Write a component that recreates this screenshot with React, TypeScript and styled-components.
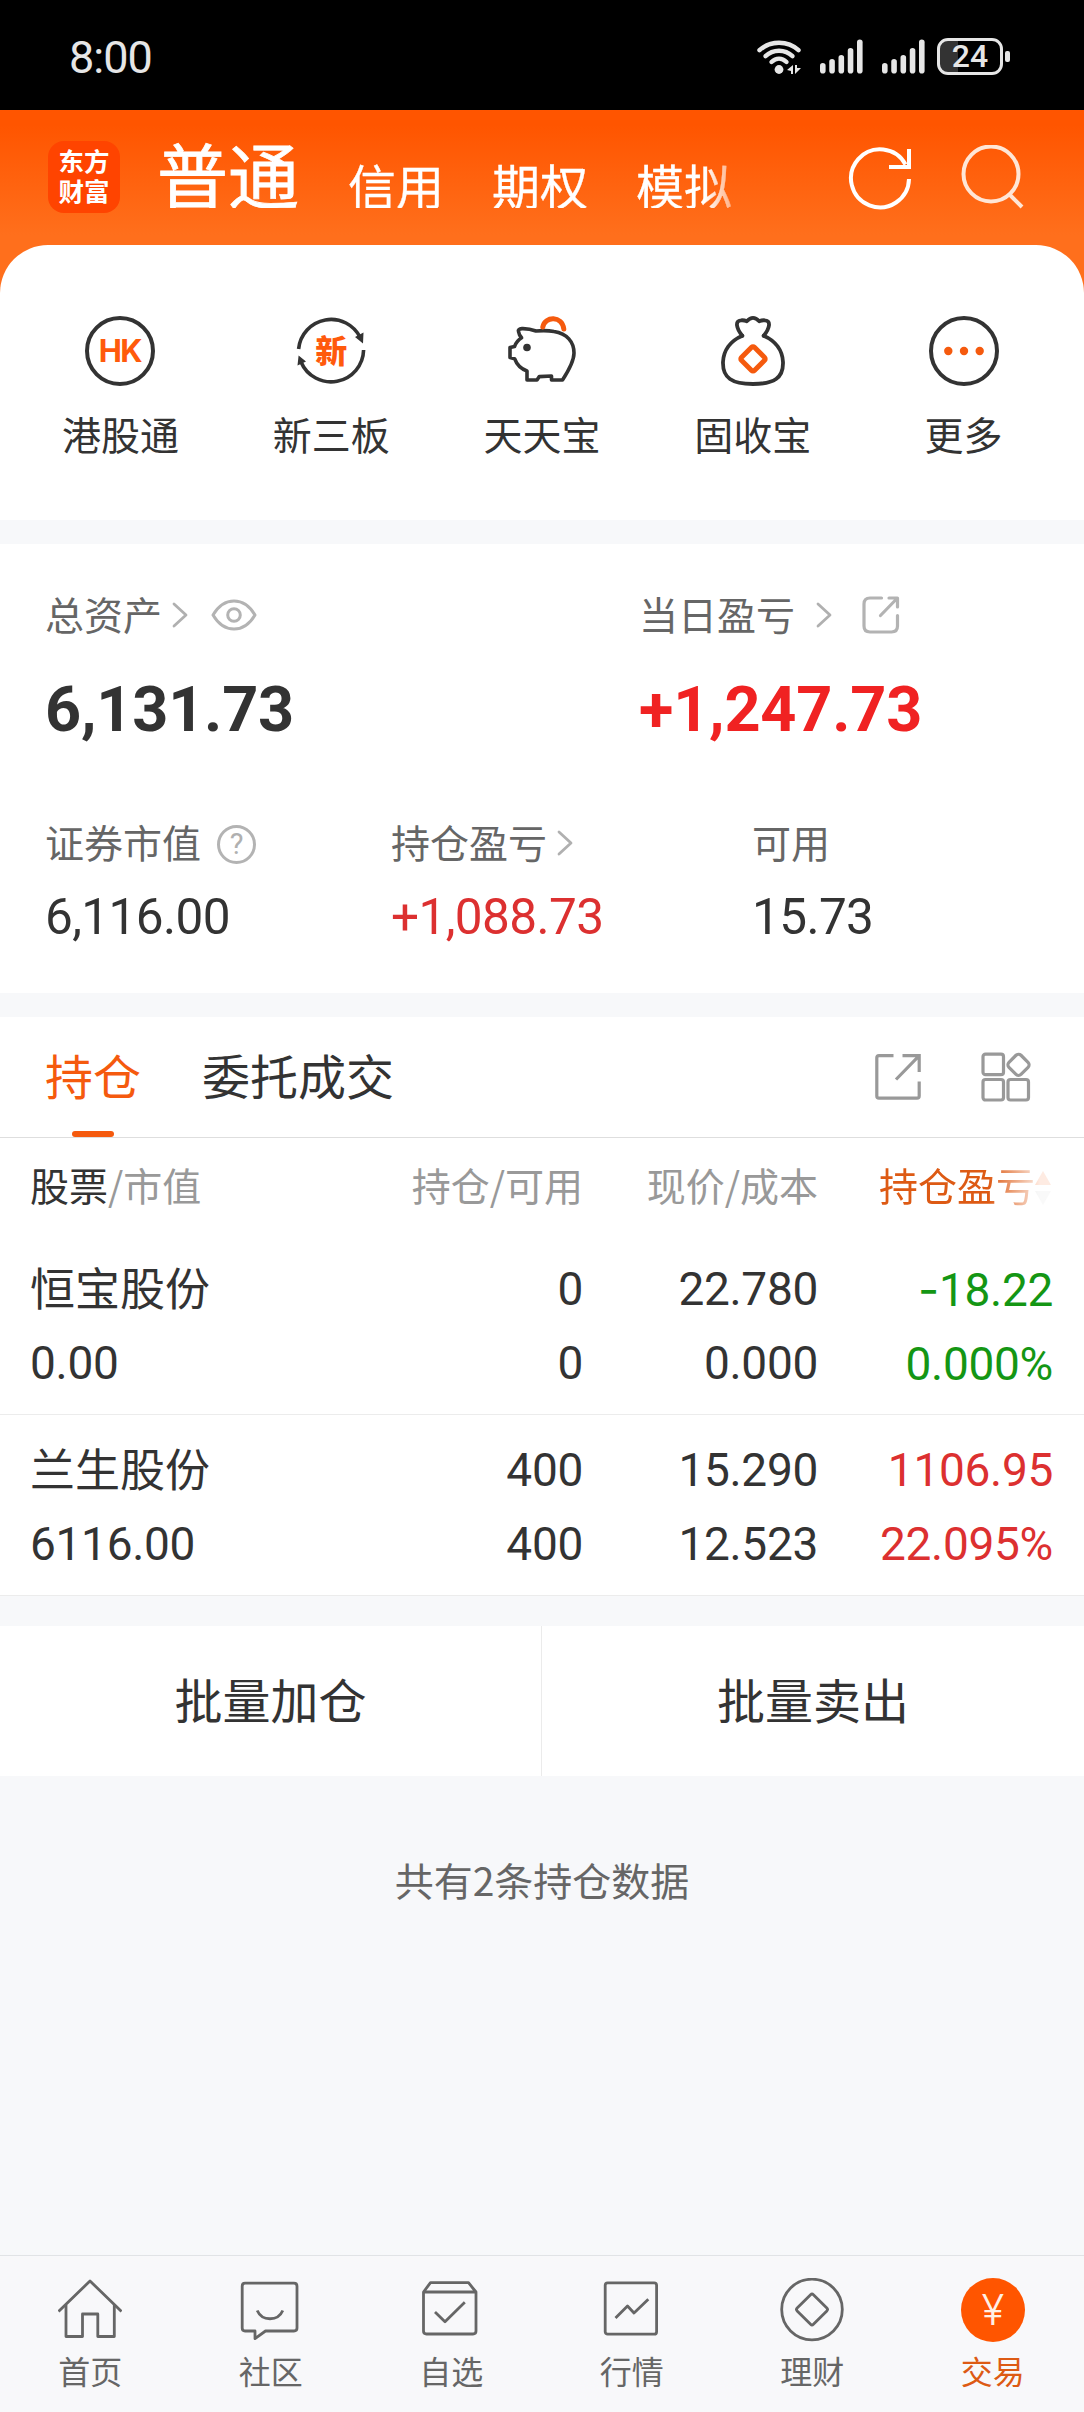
import React from "react";
import styled, { createGlobalStyle } from "styled-components";

const CJK = '"Noto Sans CJK SC", "Noto Sans", sans-serif';
const NUM = 'Roboto, "Noto Sans CJK SC", sans-serif';
const INK = "#333333";
const ORANGE = "#f55a0e";
const RED = "#dc3030";
const GREEN = "#149614";

const GlobalStyle = createGlobalStyle`
  * { box-sizing: border-box; }
  html, body { margin: 0; padding: 0; }
  body { background: #f7f8fa; font-family: ${CJK}; color: ${INK}; }
  svg { display: block; flex: none; }
`;

const Screen = styled.div`
  width: 1084px;
  height: 2412px;
  display: flex;
  flex-direction: column;
  background: #f7f8fa;
  overflow: hidden;
  white-space: nowrap;
`;

/* ---------- status bar ---------- */

const StatusBar = styled.div`
  height: 110px;
  flex: none;
  background: #000;
  display: flex;
  align-items: center;
  justify-content: space-between;
  padding: 3px 74px 0 69px;
`;

const Clock = styled.span`
  font: 400 45px/50px ${NUM};
  letter-spacing: -1px;
  padding-top: 3px;
  color: #e6e6e6;
`;

const StatusIcons = styled.div`
  display: flex;
  align-items: center;
`;

const Signal = styled.svg`
  margin-left: 19px;
`;

const Battery = styled.div`
  margin-left: 12px;
  display: flex;
  align-items: center;
  gap: 2px;
`;

const BatteryBody = styled.div`
  width: 66px;
  height: 37px;
  border: 3px solid #e6e6e6;
  border-radius: 11px;
  background: linear-gradient(to right, #333 18px, #000 18px);
  font: 500 32px/31px ${NUM};
  color: #e6e6e6;
  text-align: center;
`;

const BatteryNub = styled.div`
  width: 5px;
  height: 11px;
  border-radius: 2px;
  background: #e6e6e6;
`;

/* ---------- header ---------- */

const Top = styled.div`
  height: 410px;
  flex: none;
  background: linear-gradient(to bottom, #ff5500 15px, #ff6f1c 125px);
`;

const Header = styled.header`
  height: 135px;
  display: flex;
  align-items: flex-start;
  padding-left: 48px;
`;

const Logo = styled.div`
  width: 72px;
  height: 72px;
  margin-top: 31px;
  border-radius: 16px;
  background: #ff4400;
  color: #fff;
  display: flex;
  flex-direction: column;
  align-items: center;
  padding-top: 6px;
`;

const LogoLine = styled.span`
  height: 30px;
  font: 700 25.5px/30px ${NUM};
`;

const AccountTabs = styled.nav`
  display: flex;
  align-items: flex-end;
  gap: 48px;
  width: 640px;
  margin-left: 37px;
  margin-top: 27px;
  color: #fff;
  mask-image: linear-gradient(to right, #000 548px, transparent 600px);
`;

const AccountTab = styled.span<{ $active?: boolean }>`
  font: ${(p) => (p.$active ? "400 71px/70px" : "400 48px/48px")} ${CJK};
  padding-bottom: ${(p) => (p.$active ? 1 : 0)}px;
  margin-right: ${(p) => (p.$active ? 1 : 0)}px;
  -webkit-text-stroke: ${(p) => (p.$active ? 0.8 : 0.3)}px currentColor;
`;

const HeaderActions = styled.div`
  display: flex;
  gap: 47px;
  margin-left: 50px;
  margin-top: 35px;
`;

const Shortcuts = styled.section`
  height: 275px;
  background: #fff;
  border-radius: 48px 48px 0 0;
  padding: 66px 15px 0 15px;
  display: grid;
  grid-template-columns: repeat(5, 1fr);
`;

const Shortcut = styled.div`
  display: flex;
  flex-direction: column;
  align-items: center;
  gap: 20px;
  font: 400 39px/44px ${CJK};
`;

const Ring = styled.div`
  width: 70px;
  height: 70px;
  margin: 5px;
  border-radius: 50%;
  border: 4px solid ${INK};
  display: flex;
  align-items: center;
  justify-content: center;
  color: #ff5a0c;
  font: 700 31px/32px Inter, ${NUM};
  letter-spacing: -1.5px;
  text-indent: -1px;
`;

const CycleIcon = styled.div`
  display: grid;
  place-items: center;
  & > * { grid-area: 1 / 1; }
`;

const CycleGlyph = styled.span`
  font: 900 32px/32px ${CJK};
  color: #ff5a0c;
  padding-bottom: 4px;
`;

/* ---------- assets ---------- */

const Assets = styled.section`
  height: 449px;
  flex: none;
  margin-top: 24px;
  background: #fff;
  padding: 45px 0 0 45px;
`;

const AssetRow = styled.div<{ $columns: string }>`
  display: grid;
  grid-template-columns: ${(p) => p.$columns};
  & + & { margin-top: 72px; }
`;

const AssetLabel = styled.div`
  height: 52px;
  display: flex;
  align-items: center;
  color: #666;
`;

const LabelText = styled.span<{ $gap: number }>`
  font: 400 39px/48px ${CJK};
  padding-bottom: 4px;
  margin-right: ${(p) => p.$gap}px;
`;

const Total = styled.div<{ $color?: string }>`
  font: 700 63px/70px ${NUM};
  letter-spacing: -0.2px;
  margin-top: 34px;
  color: ${(p) => p.$color ?? INK};
`;

const Amount = styled.div<{ $color?: string }>`
  font: 400 49.5px/60px ${NUM};
  letter-spacing: -0.6px;
  margin-top: 18px;
  color: ${(p) => p.$color ?? INK};
`;

const Help = styled.span`
  width: 39px;
  height: 39px;
  margin-top: 2px;
  border: 3px solid #b3b3b3;
  border-radius: 50%;
  color: #b0b0b0;
  font: 400 29px/33px ${NUM};
  text-align: center;
`;

const Spacer = styled.span<{ $w: number }>`
  width: ${(p) => p.$w}px;
`;

/* ---------- holdings ---------- */

const Holdings = styled.section`
  flex: none;
  margin-top: 24px;
  background: #fff;
`;

const TabBar = styled.div`
  height: 121px;
  border-bottom: 1px solid #dedede;
  display: flex;
  padding: 0 53px 0 45px;
`;

const Tab = styled.div<{ $active?: boolean }>`
  height: 120px;
  margin-right: 61px;
  padding-top: 27px;
  display: flex;
  flex-direction: column;
  align-items: center;
  font: 400 48px/60px ${CJK};
  color: ${(p) => (p.$active ? ORANGE : INK)};
`;

const TabMark = styled.i`
  width: 42px;
  height: 6px;
  margin-top: auto;
  border-radius: 3px;
  background: ${ORANGE};
`;

const TabTools = styled.div`
  margin-left: auto;
  display: flex;
  align-items: center;
  gap: 60px;
`;

const TableRow = styled.div`
  display: grid;
  grid-template-columns: 320px 233px 235px 235px;
  padding: 0 31px 0 30px;
`;

const HeadRow = styled(TableRow)`
  height: 96px;
  font: 400 39px/92px ${CJK};
  color: #999;
`;

const HeadCell = styled.div<{ $left?: boolean }>`
  text-align: ${(p) => (p.$left ? "left" : "right")};
`;

const Strong = styled.span`
  color: ${INK};
`;

const SortCell = styled.div`
  display: flex;
  justify-content: flex-end;
  color: #dd5a14;
  mask-image: linear-gradient(to right, #000 170px, rgba(0, 0, 0, 0.12) 222px);
`;

const SortArrows = styled.svg`
  margin: 32px 2px 0 0;
`;

const StockRow = styled(TableRow)`
  height: 181px;
  padding-top: 18px;
  border-bottom: 1px solid #ececec;
`;

const Cell = styled.div<{ $left?: boolean; $color?: string }>`
  display: flex;
  flex-direction: column;
  align-items: ${(p) => (p.$left ? "flex-start" : "flex-end")};
  font: 400 46px/74px ${NUM};
  letter-spacing: -0.3px;
  color: ${(p) => p.$color ?? INK};
`;

const StockName = styled.span`
  font: 400 45px/70px ${CJK};
  letter-spacing: 0;
  height: 74px;
`;

const Minus = styled.span`
  font-family: Inter, ${NUM};
`;

const Actions = styled.div`
  flex: none;
  display: grid;
  grid-template-columns: 541px 1fr;
  height: 150px;
  margin-top: 30px;
  background: #fff;
`;

const Action = styled.div`
  text-align: center;
  font: 400 48px/144px ${CJK};
  & + & { border-left: 1px solid #ebebeb; }
`;

const Note = styled.p`
  margin: 78px 0 0;
  text-align: center;
  font: 400 39px/50px ${CJK};
  color: #666;
`;

/* ---------- bottom navigation ---------- */

const BottomNav = styled.nav`
  margin-top: auto;
  height: 157px;
  flex: none;
  border-top: 1px solid #e1e3e6;
  background: #f8f8fa;
  display: grid;
  grid-template-columns: repeat(6, 1fr);
  padding: 22px 1px 0 0;
`;

const NavItem = styled.div<{ $active?: boolean }>`
  display: flex;
  flex-direction: column;
  align-items: center;
  gap: 10px;
  font: 400 32px/36px ${CJK};
  color: ${(p) => (p.$active ? "#dd5a14" : "#666")};
`;

const Coin = styled.div`
  width: 64px;
  height: 64px;
  border-radius: 50%;
  background: #ff5500;
  color: #fff0e6;
  font: 300 42px/64px Inter, ${NUM};
  text-align: center;
`;

/* ---------- icons ---------- */

const WifiIcon = () => (
  <svg width="44" height="36" viewBox="0 0 44 36" fill="none" stroke="#e6e6e6" strokeWidth="4.4" strokeLinecap="round">
    <path d="M2.5 11.2C13 1.2 31 1.2 41.5 11.2" />
    <path d="M8.5 17.2C16 10 28 10 35.5 17.2" />
    <path d="M14.5 23C19 18.6 25 18.6 29.5 23" />
    <circle cx="22" cy="30.5" r="4.4" fill="#e6e6e6" stroke="none" />
    <path d="M36 26v9h-2v-3l-4-1 6-5zM38 26v9l6-6h-4v-3z" fill="#e6e6e6" stroke="none" />
  </svg>
);

const SignalIcon = () => (
  <Signal width="43" height="35" viewBox="0 0 43 35" fill="#e6e6e6">
    {[10.5, 14.5, 18.5, 25.5, 34].map((h, i) => (
      <rect key={i} x={i * 9.25} y={34.5 - h} width="5.6" height={h} rx="2.8" />
    ))}
  </Signal>
);

const RefreshIcon = () => (
  <svg width="66" height="66" viewBox="0 0 66 66" fill="none" stroke="#fff" strokeWidth="4">
    <path d="M62 34A29 29 0 1 1 58.5 19.5" />
    <path d="M62 4V22H42" />
  </svg>
);

const SearchIcon = () => (
  <svg width="66" height="66" viewBox="0 0 66 66" fill="none" stroke="#ffe6d6" strokeWidth="4">
    <circle cx="31" cy="29" r="27.5" />
    <path d="M49 49L62 62" />
  </svg>
);

const CycleArrows = () => (
  <svg width="80" height="80" viewBox="0 0 80 80" fill="none" stroke={INK} strokeWidth="3.6">
    <path d="M7.6 38A32.6 32.6 0 0 1 69.5 27" />
    <path d="M72.6 39A32.6 32.6 0 0 1 10 51" />
    <path d="M64 26L72.5 21.5L72 32.5ZM7.6 44.5L15 50.5L6.5 54.5Z" fill={INK} stroke="none" />
  </svg>
);

const PigIcon = () => (
  <svg width="80" height="80" viewBox="0 0 80 80" fill="none" stroke={INK} strokeWidth="3.6" strokeLinejoin="round">
    <path d="M16.5 20.5Q15.5 18 20 17.6Q27 17.4 34 20C40 19.5 46 19.4 52 20.5C65 22.5 72 31 72 42C72 50 67 59 60.5 69H49.5V65L37.3 65.6L35 69H25V60Q16 57 12.6 47.7L8 46.6V36.6L12.5 35.6Q14.5 30 19.6 26.8Q17 24 16.5 20.5Z" />
    <circle cx="25" cy="36.5" r="3.8" fill={INK} stroke="none" />
    <path d="M40.8 16C43 5 60 4.5 61.8 18" stroke={ORANGE} strokeWidth="5" strokeLinecap="round" />
  </svg>
);

const BagIcon = () => (
  <svg width="80" height="80" viewBox="0 0 80 80" fill="none" stroke={INK} strokeWidth="3.8" strokeLinejoin="round" strokeLinecap="round">
    <path d="M29.3 24.7C23.5 18 21.5 9.5 28 9.3Q31 9 33.8 10.2Q40 3.6 46.2 10.2Q49 9 52 9.3C58.5 9.5 56.5 18 50.7 24.7" />
    <path d="M29.3 24.7C17 30 10.5 40 10 51C9.5 67 19 73 40 73S70.5 67 70 51C69.5 40 63 30 50.7 24.7" />
    <rect x="30.8" y="38.7" width="18.4" height="18.4" rx="2" transform="rotate(45 40 47.9)" stroke={ORANGE} strokeWidth="5" />
  </svg>
);

const MoreIcon = () => (
  <svg width="80" height="80" viewBox="0 0 80 80" fill="none" stroke={INK} strokeWidth="4">
    <circle cx="40" cy="40" r="33" />
    <g fill={ORANGE} stroke="none">
      <circle cx="24.3" cy="40" r="4.2" />
      <circle cx="40" cy="40" r="4.2" />
      <circle cx="55.7" cy="40" r="4.2" />
    </g>
  </svg>
);

const Chevron = () => (
  <svg width="16" height="26" viewBox="0 0 16 26" fill="none" stroke="#b0b0b0" strokeWidth="2.8" strokeLinecap="round" strokeLinejoin="round">
    <path d="M2 2L14 13L2 24" />
  </svg>
);

const EyeIcon = () => (
  <svg width="46" height="32" viewBox="0 0 46 32" fill="none" stroke="#b3b3b3" strokeWidth="3" strokeLinejoin="round">
    <path d="M2 16C13-2.7 33-2.7 44 16C33 34.7 13 34.7 2 16Z" />
    <circle cx="23" cy="16" r="6.3" />
  </svg>
);

const ShareSoftIcon = () => (
  <svg width="38" height="38" viewBox="0 0 38 38" fill="none" stroke="#b3b3b3" strokeWidth="3.2" strokeLinecap="round" strokeLinejoin="round">
    <path d="M19.5 2H8Q2 2 2 8V30Q2 36 8 36H29.5Q35.5 36 35.5 30V19.5" />
    <path d="M27 2H35.5V11M35 2.5L18.5 19.5" />
  </svg>
);

const ShareIcon = () => (
  <svg width="46" height="48" viewBox="0 0 46 48" fill="none" stroke="#999" strokeWidth="3.2">
    <path d="M18.5 2.6H4Q1.8 2.6 1.8 4.8V43Q1.8 45.2 4 45.2H42Q44.2 45.2 44.2 43V28.5" />
    <path d="M27.5 2.6H44.2V19M43.5 3.3L21 26.5" />
  </svg>
);

const GridIcon = () => (
  <svg width="50" height="50" viewBox="0 0 50 50" fill="none" stroke="#999" strokeWidth="3.2">
    <rect x="2" y="2.2" width="20.5" height="20.5" rx="2.5" />
    <rect x="2" y="27.5" width="20.5" height="20.5" rx="2.5" />
    <rect x="27" y="27.5" width="20.5" height="20.5" rx="2.5" />
    <rect x="29" y="4.3" width="17" height="17" rx="3.5" transform="rotate(45 37.5 12.8)" />
  </svg>
);

const NavSvg = ({ children }: { children: React.ReactNode }) => (
  <svg width="64" height="64" viewBox="0 0 64 64" fill="none" stroke="#666" strokeWidth="2.8" strokeLinejoin="round">
    {children}
  </svg>
);

const HomeIcon = () => (
  <NavSvg>
    <path d="M0.5 33.5L32 3L63.5 33.5" />
    <path d="M8 27V58.5H24.5V36H39.8V58.5H56.3V27" />
  </NavSvg>
);

const CommunityIcon = () => (
  <NavSvg>
    <path d="M6 5.2H55Q58 5.2 58 8.2V50Q58 53 55 53H26.5L16 60.6V53H6Q3.2 53 3.2 50V8.2Q3.2 5.2 6 5.2Z" />
    <path d="M18.2 32.5C23 43.5 39 43.5 43.8 32.5" />
  </NavSvg>
);

const WatchlistIcon = () => (
  <NavSvg>
    <path d="M4.5 14L11.5 4.7H49.5L57 14V53Q57 56 54 56H7.5Q4.5 56 4.5 53ZM4.5 14H57" />
    <path d="M16 34L26 43.7L45.8 24.3" />
  </NavSvg>
);

const MarketIcon = () => (
  <NavSvg>
    <rect x="5.2" y="4.8" width="51.4" height="51.4" rx="2.5" />
    <path d="M15.5 40L27.5 28L34 35L48.3 21.3" />
  </NavSvg>
);

const WealthIcon = () => (
  <NavSvg>
    <circle cx="32" cy="31.5" r="30.3" />
    <rect x="20.5" y="20" width="23" height="23" rx="2" transform="rotate(45 32 31.5)" />
  </NavSvg>
);

/* ---------- data ---------- */

const stocks = [
  { name: "恒宝股份", value: "0.00", held: ["0", "0"], price: ["22.780", "0.000"], loss: true, profit: ["18.22", "0.000%"], color: GREEN },
  { name: "兰生股份", value: "6116.00", held: ["400", "400"], price: ["15.290", "12.523"], loss: false, profit: ["1106.95", "22.095%"], color: RED },
];

const App: React.FC = () => (
  <Screen>
    <GlobalStyle />
    <StatusBar>
      <Clock>8:00</Clock>
      <StatusIcons>
        <WifiIcon />
        <SignalIcon />
        <SignalIcon />
        <Battery>
          <BatteryBody>24</BatteryBody>
          <BatteryNub />
        </Battery>
      </StatusIcons>
    </StatusBar>

    <Top>
      <Header>
        <Logo>
          <LogoLine>东方</LogoLine>
          <LogoLine>财富</LogoLine>
        </Logo>
        <AccountTabs>
          <AccountTab $active>普通</AccountTab>
          <AccountTab>信用</AccountTab>
          <AccountTab>期权</AccountTab>
          <AccountTab>模拟</AccountTab>
        </AccountTabs>
        <HeaderActions>
          <RefreshIcon />
          <SearchIcon />
        </HeaderActions>
      </Header>
      <Shortcuts>
        <Shortcut>
          <Ring>HK</Ring>
          港股通
        </Shortcut>
        <Shortcut>
          <CycleIcon>
            <CycleArrows />
            <CycleGlyph>新</CycleGlyph>
          </CycleIcon>
          新三板
        </Shortcut>
        <Shortcut>
          <PigIcon />
          天天宝
        </Shortcut>
        <Shortcut>
          <BagIcon />
          固收宝
        </Shortcut>
        <Shortcut>
          <MoreIcon />
          更多
        </Shortcut>
      </Shortcuts>
    </Top>

    <Assets>
      <AssetRow $columns="594px 1fr">
        <div>
          <AssetLabel>
            <LabelText $gap={10}>总资产</LabelText>
            <Chevron />
            <Spacer $w={23} />
            <EyeIcon />
          </AssetLabel>
          <Total>6,131.73</Total>
        </div>
        <div>
          <AssetLabel>
            <LabelText $gap={21}>当日盈亏</LabelText>
            <Chevron />
            <Spacer $w={30} />
            <ShareSoftIcon />
          </AssetLabel>
          <Total $color="#f02222">+1,247.73</Total>
        </div>
      </AssetRow>
      <AssetRow $columns="346px 361px 1fr">
        <div>
          <AssetLabel>
            <LabelText $gap={16}>证券市值</LabelText>
            <Help>?</Help>
          </AssetLabel>
          <Amount>6,116.00</Amount>
        </div>
        <div>
          <AssetLabel>
            <LabelText $gap={10}>持仓盈亏</LabelText>
            <Chevron />
          </AssetLabel>
          <Amount $color={RED}>+1,088.73</Amount>
        </div>
        <div>
          <AssetLabel>
            <LabelText $gap={0}>可用</LabelText>
          </AssetLabel>
          <Amount>15.73</Amount>
        </div>
      </AssetRow>
    </Assets>

    <Holdings>
      <TabBar>
        <Tab $active>
          持仓
          <TabMark />
        </Tab>
        <Tab>委托成交</Tab>
        <TabTools>
          <ShareIcon />
          <GridIcon />
        </TabTools>
      </TabBar>
      <HeadRow>
        <HeadCell $left>
          <Strong>股票</Strong>/市值
        </HeadCell>
        <HeadCell>持仓/可用</HeadCell>
        <HeadCell>现价/成本</HeadCell>
        <SortCell>
          持仓盈亏
          <SortArrows width="16" height="36" viewBox="0 0 16 36">
            <path d="M8 1L16 15H0Z" fill="#f55a0e" />
            <path d="M8 35L16 21H0Z" fill="#ccc" />
          </SortArrows>
        </SortCell>
      </HeadRow>
      {stocks.map((s) => (
        <StockRow key={s.name}>
          <Cell $left>
            <StockName>{s.name}</StockName>
            <span>{s.value}</span>
          </Cell>
          <Cell>
            <span>{s.held[0]}</span>
            <span>{s.held[1]}</span>
          </Cell>
          <Cell>
            <span>{s.price[0]}</span>
            <span>{s.price[1]}</span>
          </Cell>
          <Cell $color={s.color}>
            <span>
              {s.loss && <Minus>-</Minus>}
              {s.profit[0]}
            </span>
            <span>{s.profit[1]}</span>
          </Cell>
        </StockRow>
      ))}
    </Holdings>

    <Actions>
      <Action>批量加仓</Action>
      <Action>批量卖出</Action>
    </Actions>
    <Note>共有2条持仓数据</Note>

    <BottomNav>
      <NavItem>
        <HomeIcon />
        首页
      </NavItem>
      <NavItem>
        <CommunityIcon />
        社区
      </NavItem>
      <NavItem>
        <WatchlistIcon />
        自选
      </NavItem>
      <NavItem>
        <MarketIcon />
        行情
      </NavItem>
      <NavItem>
        <WealthIcon />
        理财
      </NavItem>
      <NavItem $active>
        <Coin>¥</Coin>
        交易
      </NavItem>
    </BottomNav>
  </Screen>
);

export default App;
